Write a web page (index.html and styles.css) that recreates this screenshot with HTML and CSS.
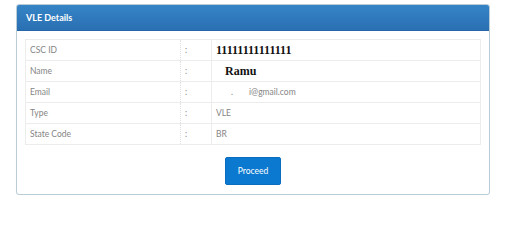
FILE: index.html
```html
<!DOCTYPE html>
<html>
<head>
<meta charset="utf-8">
<link rel="stylesheet" href="styles.css">
</head>
<body>
<div class="panel">
  <div class="panel-head">VLE Details</div>
  <div class="panel-body">
    <table class="details">
      <tr><td class="lbl">CSC ID</td><td class="sep">:</td><td class="val"><b class="serif">11111111111111</b></td></tr>
      <tr><td class="lbl">Name</td><td class="sep">:</td><td class="val"><b class="serif name">Ramu</b></td></tr>
      <tr><td class="lbl">Email</td><td class="sep">:</td><td class="val"><span class="mail"><span class="dot">.</span>i@gmail.com</span></td></tr>
      <tr><td class="lbl">Type</td><td class="sep">:</td><td class="val">VLE</td></tr>
      <tr><td class="lbl">State Code</td><td class="sep">:</td><td class="val">BR</td></tr>
    </table>
    <div class="actions"><button class="btn">Proceed</button></div>
  </div>
</div>
</body>
</html>
```
FILE: styles.css
```css
html, body { margin: 0; padding: 0; background: #fff; }
body { font-family: "Lato", "Open Sans", sans-serif; }
.panel {
  margin: 4px 0 0 16px;
  width: 472px;
  border: 1px solid #b9ccd8;
  border-radius: 3px;
  background: #fff;
  box-shadow: 0 1px 1px rgba(0,0,0,0.05);
}
.panel-head {
  height: 26px;
  line-height: 26px;
  padding-left: 9px;
  color: #fff;
  font-weight: 700;
  font-size: 9px;
  background: linear-gradient(#3584c6, #2a70b3);
  border-radius: 2px 2px 0 0;
  border-bottom: 1px solid #2466a8;
  box-sizing: border-box;
}
.panel-body { padding: 8px 8px 9px 8px; }
.details {
  width: 456px;
  border-collapse: collapse;
  font-size: 8.5px;
  color: #858585;
}
.details td {
  height: 20px;
  border: 1px solid #ececec;
  padding: 0 4px;
  vertical-align: middle;
}
.details td.lbl { width: 146px; border-right: 1px dotted #e2e2e2; }
.details td.sep { width: 22px; border-left: 1px dotted #e2e2e2; }
.serif { font-family: "Liberation Serif", serif; font-size: 12px; color: #111; }
.name { margin-left: 9px; }
.mail { padding-left: 15px; }
.dot { display: inline-block; width: 18px; }
.actions { display: flex; justify-content: center; padding-top: 12px; }
.btn {
  width: 56px;
  height: 28px;
  border: 1px solid #0a6dbd;
  border-radius: 2px;
  background: #0b79d0;
  color: #fff;
  font-family: "Lato", sans-serif;
  font-size: 8.5px;
  padding: 0;
}
```
